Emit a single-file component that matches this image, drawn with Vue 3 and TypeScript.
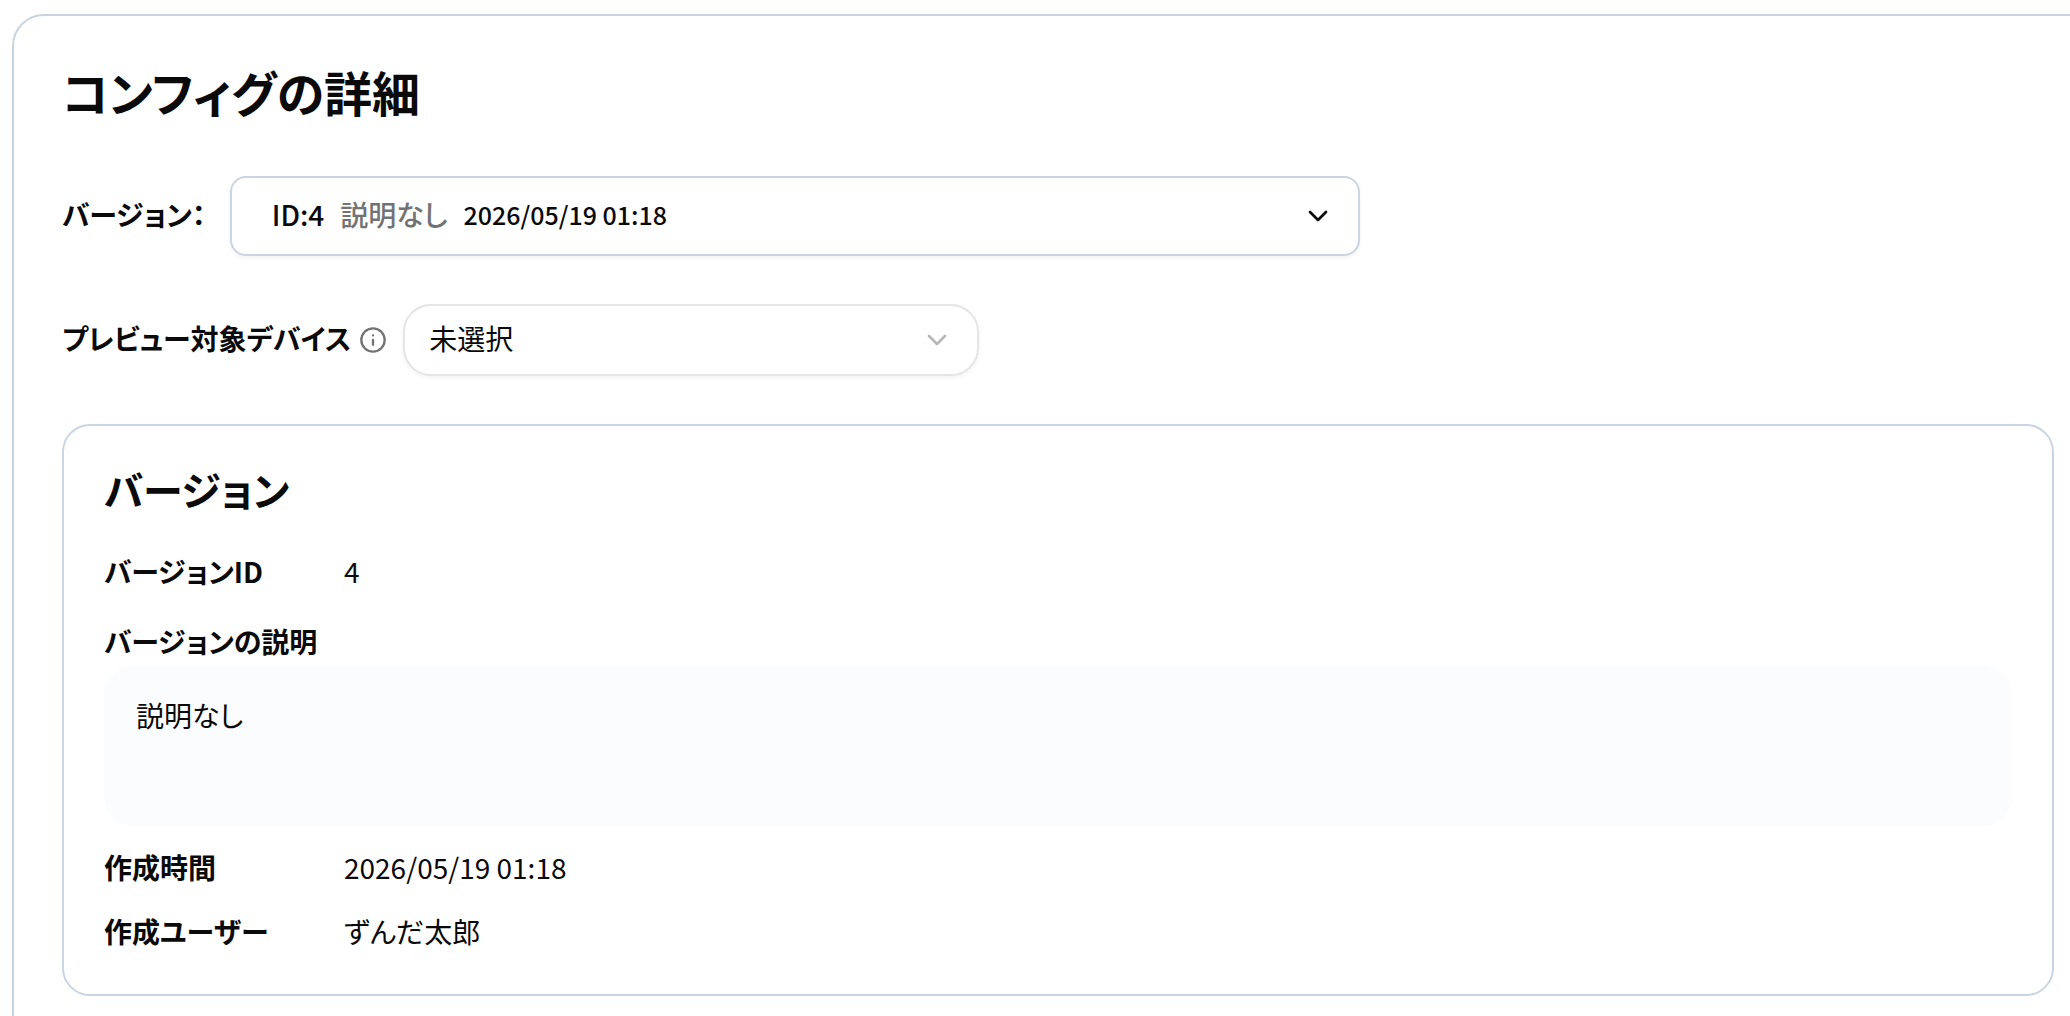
<script setup lang="ts">
import { ref } from 'vue'

interface ConfigVersion {
  id: number
  description: string
  createdAt: string
  createdBy: string
}

const version = ref<ConfigVersion>({
  id: 4,
  description: '説明なし',
  createdAt: '2026/05/19 01:18',
  createdBy: 'ずんだ太郎',
})

const device = ref('none')
</script>

<template>
  <div class="viewport">
    <main class="panel">
      <h1 class="title">コンフィグの詳細</h1>

      <div class="field version-field">
        <label class="label" for="version">バージョン：</label>
        <button id="version" class="version-button" type="button" aria-haspopup="listbox">
          <span>ID:{{ version.id }}</span>
          <span class="muted">{{ version.description }}</span>
          <span class="date">{{ version.createdAt }}</span>
          <svg class="chevron" viewBox="0 0 24 24" aria-hidden="true"><path d="m6 9 6 6 6-6" /></svg>
        </button>
      </div>

      <div class="field device-field">
        <label class="label" for="device">プレビュー対象デバイス</label>
        <svg class="info" viewBox="0 0 24 24" aria-hidden="true">
          <circle cx="12" cy="12" r="10" />
          <path d="M12 16v-4M12 8h.01" />
        </svg>
        <div class="select-wrap">
          <select id="device" v-model="device" class="device-select">
            <option value="none">未選択</option>
          </select>
          <svg class="chevron faded" viewBox="0 0 24 24" aria-hidden="true"><path d="m6 9 6 6 6-6" /></svg>
        </div>
      </div>

      <section class="card">
        <h2 class="heading">バージョン</h2>
        <dl class="details">
          <div class="row">
            <dt>バージョンID</dt>
            <dd>{{ version.id }}</dd>
          </div>
          <div class="description">
            <dt>バージョンの説明</dt>
            <dd>{{ version.description }}</dd>
          </div>
          <div class="row">
            <dt>作成時間</dt>
            <dd>{{ version.createdAt }}</dd>
          </div>
          <div class="row">
            <dt>作成ユーザー</dt>
            <dd>{{ version.createdBy }}</dd>
          </div>
        </dl>
      </section>
    </main>
  </div>
</template>

<style>
body {
  margin: 0;
  background: #fff;
}
</style>

<style scoped>
.viewport {
  box-sizing: border-box;
  height: 100vh;
  overflow: hidden;
  padding: 14px 0 0 12px;
  color: #0a0a0a;
  font-family: "Noto Sans CJK JP", "Noto Sans", sans-serif;
  font-size: 28px;
  line-height: 34px;
  font-feature-settings: "palt";
}

/* The panel runs past the right edge of the viewport. */
.panel {
  margin-right: -34px;
  padding: 48px;
  border: 2px solid #cad5e2;
  border-radius: 32px;
  background: #fff;
}

.title {
  margin: 0 0 58px;
  font-size: 48px;
  font-weight: 700;
  line-height: 54px;
}

.field {
  display: flex;
  align-items: center;
  margin-bottom: 48px;
}

.version-field {
  gap: 24px;
}

.label {
  padding-bottom: 4px;
  font-weight: 700;
  white-space: nowrap;
}

.version-button {
  display: flex;
  align-items: center;
  gap: 16px;
  box-sizing: border-box;
  width: 1130px;
  height: 80px;
  padding: 0 24px 0 40px;
  border: 2px solid #cad5e2;
  border-radius: 16px;
  background: #fff;
  box-shadow: 0 2px 4px rgba(0, 0, 0, 0.05);
  color: inherit;
  font: inherit;
  font-weight: 500;
  font-feature-settings: inherit;
}

.version-button span {
  padding-bottom: 4px;
}

.muted {
  color: #737373;
}

.date {
  font-size: 25px;
}

.chevron {
  width: 32px;
  height: 32px;
  margin-left: auto;
  fill: none;
  stroke: #0a0a0a;
  stroke-width: 2;
  stroke-linecap: round;
  stroke-linejoin: round;
}

.info {
  width: 28px;
  height: 28px;
  margin: 0 16px 0 8px;
  fill: none;
  stroke: #737373;
  stroke-width: 2;
  stroke-linecap: round;
  stroke-linejoin: round;
}

.select-wrap {
  display: grid;
  align-items: center;
  width: 576px;
}

.select-wrap > * {
  grid-area: 1 / 1;
}

.device-select {
  box-sizing: border-box;
  width: 100%;
  height: 72px;
  padding: 0 24px 4px;
  border: 2px solid #e5e5e5;
  border-radius: 28px;
  appearance: none;
  background: #fff;
  box-shadow: 0 2px 4px rgba(0, 0, 0, 0.05);
  color: inherit;
  font: inherit;
  font-feature-settings: inherit;
}

.faded {
  margin-right: 26px;
  stroke: #737373;
  opacity: 0.5;
  pointer-events: none;
}

.card {
  padding: 40px 40px 46px;
  border: 2px solid #cad5e2;
  border-radius: 28px;
}

.heading {
  margin: 0 0 42px;
  font-size: 40px;
  font-weight: 700;
  line-height: 46px;
}

.details {
  margin: 0;
}

.row {
  display: flex;
  margin-bottom: 30px;
}

.row:last-child {
  margin-bottom: 0;
}

dt {
  font-weight: 700;
}

.row dt {
  width: 240px;
}

dd {
  margin: 0;
}

.description {
  margin-bottom: 24px;
}

.description dt {
  padding-bottom: 2px;
  line-height: 46px;
}

.description dd {
  box-sizing: border-box;
  min-height: 160px;
  padding: 32px;
  border-radius: 28px;
  background: #fbfcfe;
}
</style>
